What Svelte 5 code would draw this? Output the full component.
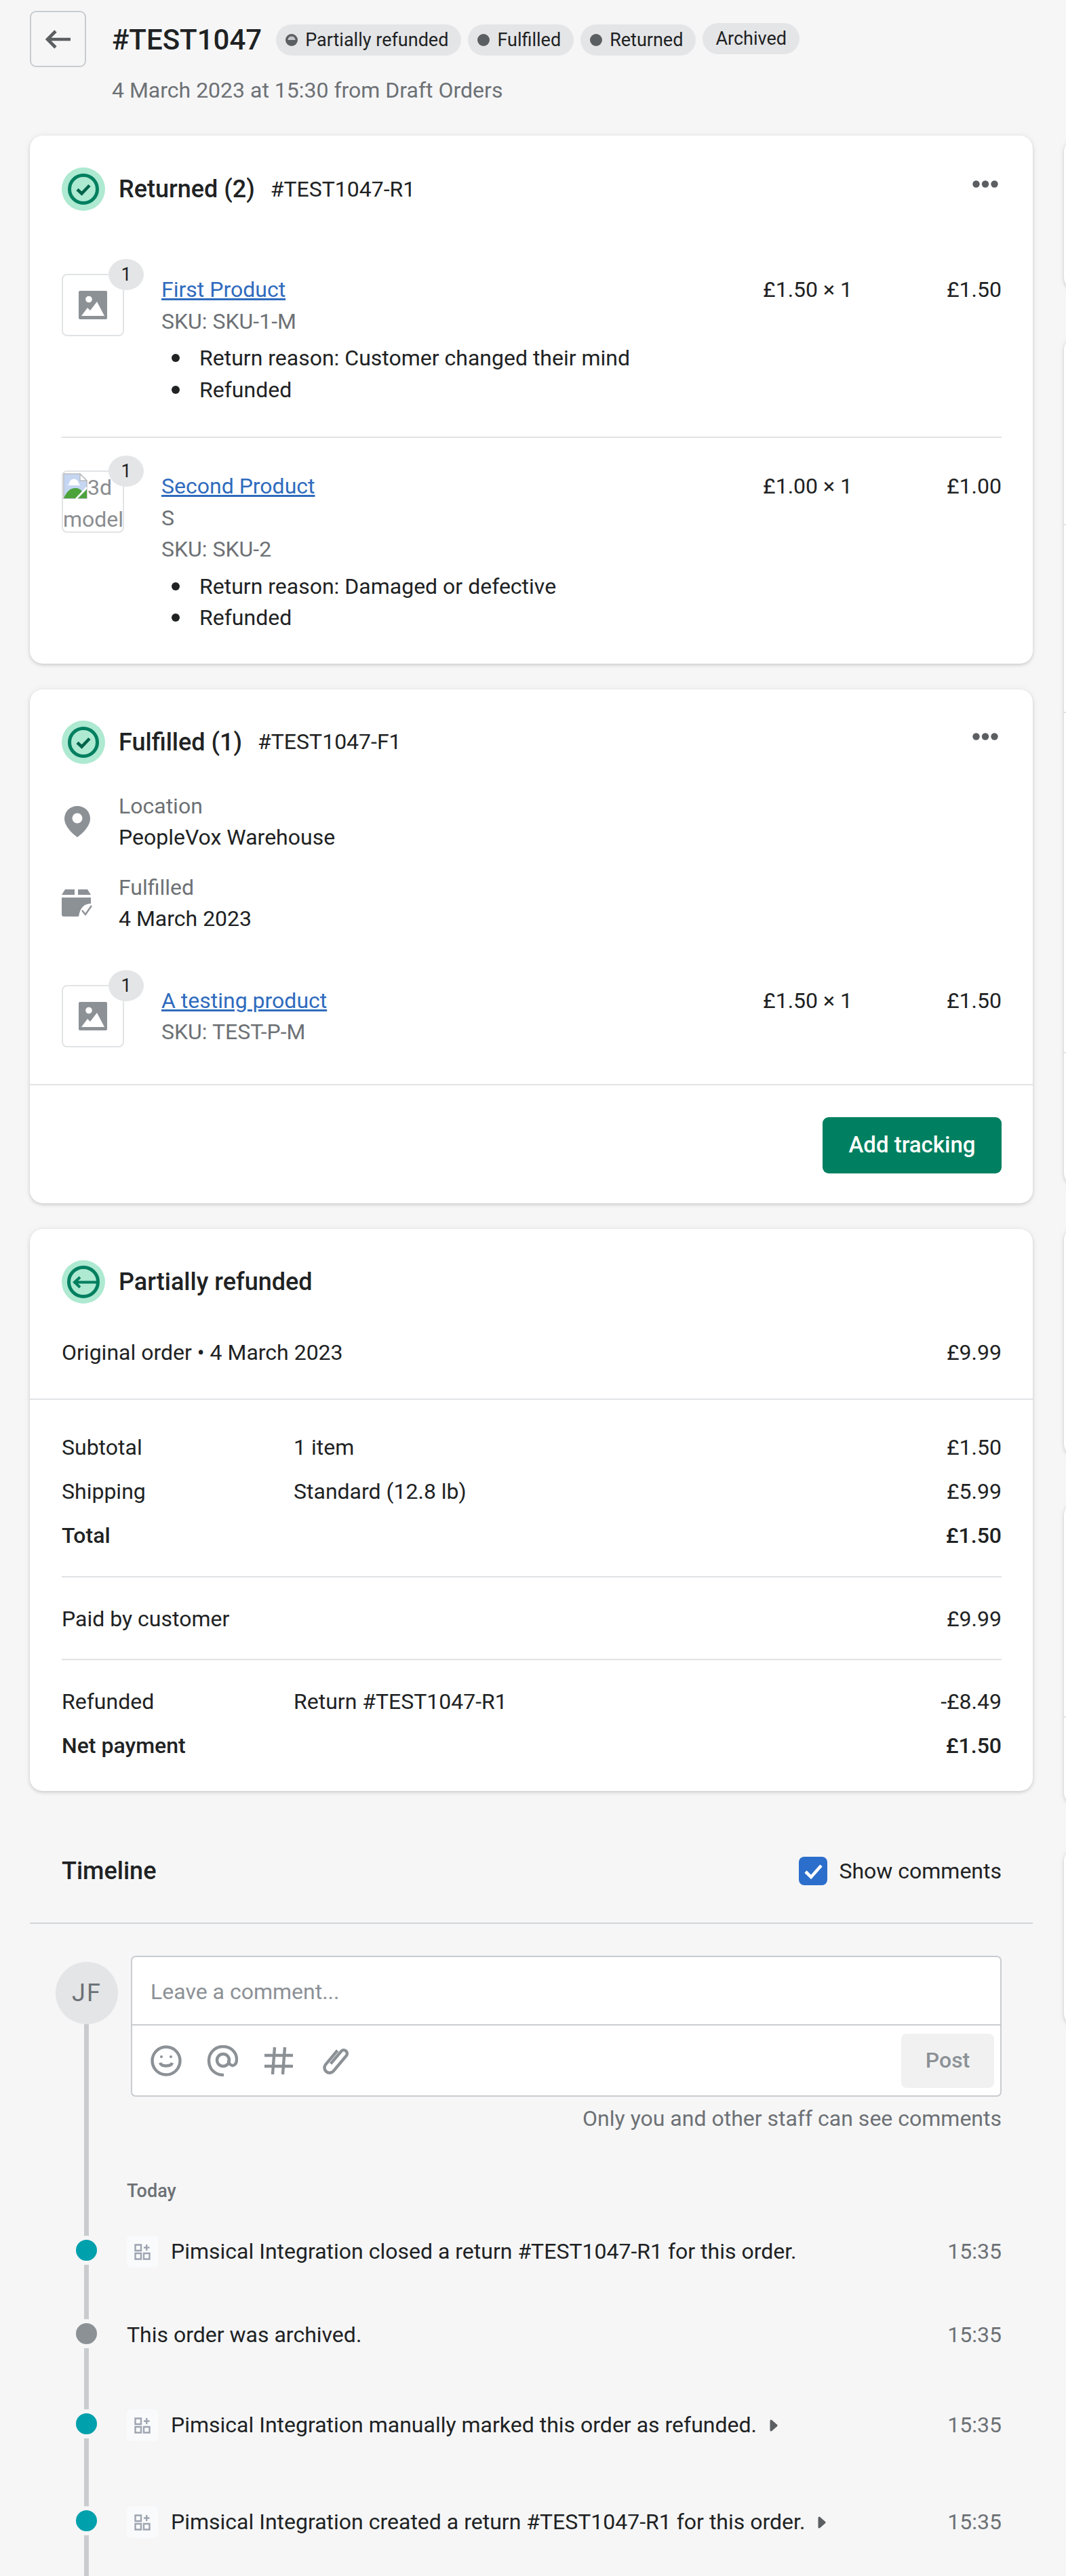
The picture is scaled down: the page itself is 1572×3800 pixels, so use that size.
<script>
	const returned = [
		{ title: 'First Product', variant: '', sku: 'SKU-1-M', reason: 'Customer changed their mind', price: '£1.50', broken: false },
		{ title: 'Second Product', variant: 'S', sku: 'SKU-2', reason: 'Damaged or defective', price: '£1.00', broken: true }
	];

	const events = [
		{ text: 'Pimsical Integration closed a return #TEST1047-R1 for this order.', app: true },
		{ text: 'This order was archived.', app: false },
		{ text: 'Pimsical Integration manually marked this order as refunded.', app: true, more: true },
		{ text: 'Pimsical Integration created a return #TEST1047-R1 for this order.', app: true, more: true }
	];

	const aside = [
		{ gap: 5, parts: [223] },
		{ gap: 69, parts: [276, 275, 500, 195] },
		{ gap: 61, parts: [339] },
		{ gap: 67, parts: [316, 129] },
		{ gap: 63, parts: [263] }
	];
</script>

{#snippet checkIcon()}
	<svg class="status" viewBox="0 0 64 64">
		<circle cx="32" cy="32" r="32" fill="#aee9d1" />
		<circle cx="32" cy="32" r="20.5" fill="none" stroke="#007f5f" stroke-width="5" />
		<path d="M23 32.5l6.5 6 11.5-12" fill="none" stroke="#00634b" stroke-width="4.5" />
	</svg>
{/snippet}

{#snippet dots()}
	<svg class="dots" viewBox="0 0 38 11" fill="#5c5f62">
		<circle cx="5.5" cy="5.5" r="5.2" />
		<circle cx="19" cy="5.5" r="5.2" />
		<circle cx="32.5" cy="5.5" r="5.2" />
	</svg>
{/snippet}

{#snippet thumb(broken)}
	<div class="thumb">
		{#if broken}
			<div class="alt">
				<svg class="broken" viewBox="0 0 36 38">
					<path d="M1 1h24l10 10v27H1z" fill="#c5d6f2" stroke="#b9bcc0" stroke-width="1.5" />
					<path d="M25 1v10h10z" fill="#fff" stroke="#b9bcc0" stroke-width="1.5" />
					<path d="M9 16a7 7 0 0 1 14-1q2 2 2 3H7q0-1 2-2z" fill="#fff" />
					<path d="M1 37c4-10 10-15 17-15 5 0 8 2 10 5L20 37z" fill="#4ca33b" />
					<path d="M22 37l13-13v13z" fill="#4ca33b" />
					<path d="M19 38l16-17" stroke="#fff" stroke-width="2.5" />
				</svg>3d model
			</div>
		{:else}
			<svg class="placeholder" viewBox="0 0 42 42">
				<rect width="42" height="42" rx="2" fill="#8c9196" />
				<circle cx="15" cy="12.5" r="4.8" fill="#fff" />
				<path d="M4 37l9-12 4 4 10-13 11 21z" fill="#fff" />
			</svg>
		{/if}
		<span class="count">1</span>
	</div>
{/snippet}

<div class="page">
	<main>
		<header>
			<button class="back" aria-label="Back">
				<svg viewBox="0 0 37 28" fill="none" stroke="#5c5f62" stroke-width="4.6">
					<path d="M37 14H3M15 2L3 14l12 12" />
				</svg>
			</button>
			<div>
				<div class="title-row">
					<h1>#TEST1047</h1>
					<span class="badge">
						<svg class="pip" viewBox="0 0 18 18">
							<circle cx="9" cy="9" r="9" fill="#5c5f62" />
							<path d="M3.5 9a5.5 5.5 0 0 1 11 0z" fill="#c4c6c9" />
						</svg>
						Partially refunded
					</span>
					<span class="badge"><i class="pip round"></i>Fulfilled</span>
					<span class="badge"><i class="pip round"></i>Returned</span>
					<span class="badge plain">Archived</span>
				</div>
				<p class="muted sub">4 March 2023 at 15:30 from Draft Orders</p>
			</div>
		</header>

		<section class="card">
			<div class="card-head">
				{@render checkIcon()}
				<h2>Returned (2)</h2>
				<span class="ref">#TEST1047-R1</span>
				{@render dots()}
			</div>
			<div class="returned">
				{#each returned as item}
					<div class="line-item">
						{@render thumb(item.broken)}
						<div class="info">
							<a href="#top">{item.title}</a>
							{#if item.variant}<div class="muted">{item.variant}</div>{/if}
							<div class="muted">SKU: {item.sku}</div>
							<ul>
								<li>Return reason: {item.reason}</li>
								<li>Refunded</li>
							</ul>
						</div>
						<span>{item.price} × 1</span>
						<span class="total">{item.price}</span>
					</div>
				{/each}
			</div>
		</section>

		<section class="card fulfilled">
			<div class="card-head">
				{@render checkIcon()}
				<h2>Fulfilled (1)</h2>
				<span class="ref">#TEST1047-F1</span>
				{@render dots()}
			</div>
			<div class="meta first">
				<span class="meta-icon">
					<svg class="pin" viewBox="0 0 38 46">
						<path d="M19 0C8.5 0 0 8 0 18.5 0 30 12 41 19 46c7-5 19-16 19-27.5C38 8 29.5 0 19 0z" fill="#8c9196" />
						<circle cx="19" cy="18" r="7.5" fill="#fff" />
					</svg>
				</span>
				<div>
					<div class="muted">Location</div>
					<div>PeopleVox Warehouse</div>
				</div>
			</div>
			<div class="meta">
				<span class="meta-icon">
					<svg class="parcel" viewBox="0 0 46 40">
						<path d="M5 0h14v8H0zM24 0h14l5 8H24z" fill="#8c9196" />
						<path d="M0 12h43v9C33 21 27 27 25 40H3q-3 0-3-3z" fill="#8c9196" />
						<path d="M30 31l5 6 9-13" fill="none" stroke="#8c9196" stroke-width="2.4" />
					</svg>
				</span>
				<div>
					<div class="muted">Fulfilled</div>
					<div>4 March 2023</div>
				</div>
			</div>
			<div class="line-item single">
				{@render thumb(false)}
				<div class="info">
					<a href="#top">A testing product</a>
					<div class="muted">SKU: TEST-P-M</div>
				</div>
				<span>£1.50 × 1</span>
				<span class="total">£1.50</span>
			</div>
			<div class="card-foot">
				<button class="primary">Add tracking</button>
			</div>
		</section>

		<section class="card payment">
			<div class="card-head">
				<svg class="status" viewBox="0 0 64 64">
					<circle cx="32" cy="32" r="32" fill="#aee9d1" />
					<circle cx="32" cy="32" r="21.5" fill="none" stroke="#007f5f" stroke-width="5" />
					<path d="M19 32.5h34M27 25l-8 7.5 8 7.5" fill="none" stroke="#007f5f" stroke-width="4" />
				</svg>
				<h2>Partially refunded</h2>
			</div>
			<div class="row original">
				<span>Original order • 4 March 2023</span>
				<span>£9.99</span>
			</div>
			<div class="summary">
				<div class="rows">
					<div class="row"><span class="label">Subtotal</span><span class="grow">1 item</span><span>£1.50</span></div>
					<div class="row"><span class="label">Shipping</span><span class="grow">Standard (12.8 lb)</span><span>£5.99</span></div>
					<div class="row strong"><span>Total</span><span>£1.50</span></div>
				</div>
				<div class="rows ruled">
					<div class="row"><span>Paid by customer</span><span>£9.99</span></div>
				</div>
				<div class="rows ruled">
					<div class="row"><span class="label">Refunded</span><span class="grow">Return #TEST1047-R1</span><span>-£8.49</span></div>
					<div class="row strong"><span>Net payment</span><span>£1.50</span></div>
				</div>
			</div>
		</section>

		<div class="timeline-head">
			<h2>Timeline</h2>
			<label>
				<span class="check">
					<svg viewBox="0 0 42 42" fill="none" stroke="#fff" stroke-width="4.6">
						<path d="M10 22l8 8 15-17" />
					</svg>
				</span>
				Show comments
			</label>
		</div>

		<div class="timeline">
			<i class="rail"></i>
			<div class="composer">
				<div class="avatar">JF</div>
				<div class="box">
					<div class="placeholder-text">Leave a comment...</div>
					<div class="tools">
						<svg viewBox="0 0 46 46" fill="none" stroke="#8c9196" stroke-width="4.4">
							<circle cx="23" cy="23" r="20.5" />
							<path d="M14 26c2 6 16 6 18 0" />
							<circle cx="16" cy="17" r="2" fill="#8c9196" stroke="none" />
							<circle cx="30" cy="17" r="2" fill="#8c9196" stroke="none" />
						</svg>
						<svg viewBox="0 0 46 46" fill="none" stroke="#8c9196" stroke-width="4.4">
							<path d="M25 44C12 44 3 35 3 23S12 2 24 2s20 9 20 19c0 6-3 9-6 9s-6-3-6-8" />
							<circle cx="24" cy="22" r="9" />
						</svg>
						<svg class="hash" viewBox="0 0 42 46" fill="none" stroke="#8c9196" stroke-width="4.4">
							<path d="M0 15h42M0 31h42M15 3l-3 40M30 3l-3 40" />
						</svg>
						<svg viewBox="0 0 46 46" fill="none" stroke="#8c9196" stroke-width="4.4">
							<path d="M16 9v27a7.500 7.500 0 0 0 15 0V6.500a5 5 0 0 0-10 0v24" transform="rotate(40 23 23)" />
						</svg>
						<button class="post">Post</button>
					</div>
				</div>
			</div>
			<p class="muted note">Only you and other staff can see comments</p>
			<div class="today muted">Today</div>
			{#each events as event}
				<div class="event">
					<i class={['bullet', event.app && 'teal']}></i>
					{#if event.app}
						<span class="app">
							<svg viewBox="0 0 24 24" fill="none" stroke="#9ea5b1" stroke-width="2.4">
								<path d="M1.500 1.500h8.500v8.500H1.500zM1.500 14h8.500v8.500H1.500zM14 14h8.500v8.500H14zM18.200 1v9M14 5.500h8.500" />
							</svg>
						</span>
					{/if}
					<span>{event.text}</span>
					{#if event.more}
						<svg class="more" viewBox="0 0 12 18">
							<path d="M2 2l8 7-8 7z" fill="#5c5f62" stroke="#5c5f62" stroke-width="3" stroke-linejoin="round" />
						</svg>
					{/if}
					<time class="muted">15:35</time>
				</div>
			{/each}
		</div>
	</main>

	<aside>
		{#each aside as card}
			<div class="side-card" style="margin-top: {card.gap}px">
				{#each card.parts as h}
					<div class="side-part" style="height: {h}px"></div>
				{/each}
			</div>
		{/each}
	</aside>
</div>

<style>
	:global(body) {
		background: #f6f6f7;
	}

	.page {
		display: flex;
		width: 1572px;
		height: 3800px;
		overflow: hidden;
		background: #f6f6f7;
		color: #202223;
		font: 32px / 46.5px Roboto, sans-serif;
	}

	main {
		display: flex;
		flex: none;
		flex-direction: column;
		width: 1479px;
		margin-left: 44px;
	}

	main > * {
		flex-shrink: 0;
	}

	aside {
		flex: none;
		width: 400px;
		margin-left: 46px;
		padding-top: 200px;
	}

	h1,
	h2,
	p,
	ul {
		margin: 0;
	}

	button {
		font: inherit;
		border: none;
	}

	.muted {
		color: #6d7175;
	}

	/* header */
	header {
		display: flex;
		gap: 38px;
		height: 200px;
		padding-top: 16px;
		box-sizing: border-box;
	}

	.back {
		display: grid;
		flex: none;
		width: 83px;
		height: 83px;
		padding: 0;
		border: 2px solid #c9cccf;
		border-radius: 9px;
		background: #f6f6f7;
		place-items: center;
	}

	.back svg {
		width: 37px;
		height: 28px;
	}

	.title-row {
		display: flex;
		align-items: center;
		gap: 10px;
		height: 86px;
	}

	h1 {
		margin-right: 11px;
		font-size: 42px;
		font-weight: 500;
		line-height: 50px;
	}

	.badge {
		display: flex;
		align-items: center;
		gap: 11px;
		height: 46px;
		padding: 0 19px 0 14px;
		border-radius: 23px;
		background: #e4e5e7;
		font-size: 27px;
	}

	.badge.plain {
		margin-bottom: 4px;
		padding-left: 19px;
	}

	.pip {
		width: 18px;
		height: 18px;
	}

	.pip.round {
		border-radius: 50%;
		background: #5c5f62;
	}

	.sub {
		margin-top: 8px;
	}

	/* cards */
	.card {
		margin-bottom: 38px;
		padding: 47px 46px 44px 47px;
		border-radius: 19px;
		background: #fff;
		box-shadow: 0 0 12px rgba(23, 24, 24, 0.05), 0 2px 5px rgba(0, 0, 0, 0.15);
	}

	.card-head {
		display: flex;
		align-items: center;
		height: 64px;
	}

	.status {
		flex: none;
		width: 64px;
		height: 64px;
		margin-right: 20px;
	}

	h2 {
		font-size: 36px;
		font-weight: 500;
		line-height: 46px;
	}

	.ref {
		margin-left: 23px;
	}

	.dots {
		width: 38px;
		height: 11px;
		margin-bottom: 16px;
		margin-left: auto;
		margin-right: 5px;
	}

	.returned {
		margin-top: 93px;
	}

	.line-item {
		display: flex;
		align-items: flex-start;
	}

	.line-item + .line-item {
		margin-top: 46px;
		padding-top: 48px;
		border-top: 2px solid #e1e3e5;
	}

	.info {
		flex: 1;
		margin-left: 55px;
	}

	.info a {
		color: #2f6bbd;
	}

	ul {
		margin-top: 8px;
		padding-left: 56px;
		list-style: none;
	}

	li {
		position: relative;
	}

	li::before {
		position: absolute;
		top: 17px;
		left: -41px;
		width: 12px;
		height: 12px;
		border-radius: 50%;
		background: #202223;
		content: '';
	}

	.total {
		width: 220px;
		text-align: right;
	}

	.thumb {
		position: relative;
		flex: none;
		width: 92px;
		height: 92px;
		box-sizing: border-box;
		border: 2px solid #e1e3e5;
		border-radius: 8px;
		display: grid;
		place-items: center;
	}

	.placeholder {
		width: 42px;
		height: 42px;
	}

	.alt {
		width: 100%;
		height: 100%;
		overflow: hidden;
		color: #8a8d90;
		line-height: 47px;
	}

	.broken {
		width: 36px;
		height: 38px;
		vertical-align: -6px;
	}

	.count {
		position: absolute;
		top: -24px;
		right: -31px;
		width: 52px;
		height: 46px;
		border-radius: 50%;
		background: #e4e5e7;
		font-size: 27px;
		line-height: 46px;
		text-align: center;
	}

	/* fulfilled */
	.fulfilled {
		padding: 46px 0 44px;
	}

	.fulfilled .card-head,
	.fulfilled .meta,
	.fulfilled .line-item {
		padding: 0 46px 0 47px;
	}

	.meta {
		display: flex;
		margin-top: 27px;
	}

	.meta.first {
		margin-top: 39px;
	}

	.meta-icon {
		display: grid;
		flex: none;
		width: 46px;
		margin-right: 38px;
		place-items: center;
	}

	.pin {
		width: 38px;
		height: 46px;
	}

	.parcel {
		width: 46px;
		height: 40px;
	}

	.line-item.single {
		margin-top: 74px;
	}

	.card-foot {
		display: flex;
		justify-content: flex-end;
		margin-top: 53px;
		padding: 47px 46px 0;
		border-top: 2px solid #e1e3e5;
	}

	.primary {
		width: 264px;
		height: 83px;
		border-radius: 9px;
		background: #008060;
		color: #fff;
		font-size: 33px;
		font-weight: 500;
	}

	/* payment */
	.payment {
		padding: 46px 0 43px;
	}

	.payment .card-head {
		padding: 0 46px 0 47px;
	}

	.row {
		display: flex;
		justify-content: space-between;
	}

	.row .label {
		width: 342px;
	}

	.row .grow {
		flex: 1;
	}

	.original {
		margin-top: 49px;
		padding: 0 46px 45px 47px;
		border-bottom: 2px solid #e1e3e5;
	}

	.summary {
		margin: 47px 46px 0 47px;
	}

	.rows {
		display: flex;
		flex-direction: column;
		gap: 18.5px;
	}

	.rows.ruled {
		margin-top: 36px;
		padding-top: 38px;
		border-top: 2px solid #e1e3e5;
	}

	.strong {
		font-weight: 500;
	}

	/* timeline */
	.timeline-head {
		display: flex;
		align-items: center;
		justify-content: space-between;
		margin-top: 57px;
		padding: 0 46px 53px 47px;
		border-bottom: 2px solid #d2d5d8;
	}

	label {
		display: flex;
		align-items: center;
		gap: 17px;
	}

	.check {
		width: 42px;
		height: 42px;
		border-radius: 8px;
		background: #2c6ecb;
	}

	.check svg {
		display: block;
	}

	.timeline {
		position: relative;
		flex: 1;
		padding: 47px 46px 0 0;
	}

	.rail {
		position: absolute;
		top: 120px;
		bottom: 0;
		left: 80px;
		width: 7px;
		background: #c9cccf;
	}

	.composer {
		position: relative;
		display: flex;
		align-items: flex-start;
		gap: 19px;
		padding-left: 38px;
	}

	.avatar {
		display: grid;
		flex: none;
		width: 92px;
		height: 92px;
		margin-top: 9px;
		border-radius: 50%;
		background: #e4e5e7;
		color: #6d7175;
		font-size: 36px;
		letter-spacing: 2px;
		place-items: center;
	}

	.box {
		flex: 1;
		height: 208px;
		box-sizing: border-box;
		border: 2px solid #c9cccf;
		border-radius: 7px;
		background: #fff;
	}

	.placeholder-text {
		height: 101px;
		padding-left: 27px;
		border-bottom: 2px solid #c9cccf;
		box-sizing: border-box;
		color: #8c9196;
		line-height: 102px;
	}

	.tools {
		display: flex;
		align-items: center;
		gap: 37px;
		height: 103px;
		padding: 0 9px 0 27px;
	}

	.tools svg {
		width: 46px;
		height: 46px;
	}

	.tools .hash {
		width: 42px;
		margin: 0 2px;
	}

	.post {
		width: 137px;
		height: 80px;
		margin-left: auto;
		border-radius: 8px;
		background: #f1f1f1;
		color: #8c9196;
		font-weight: 500;
	}

	.note {
		margin-top: 9px;
		text-align: right;
	}

	.today {
		margin: 60px 0 0 143px;
		font-size: 27px;
		font-weight: 500;
	}

	.event {
		position: relative;
		display: flex;
		align-items: center;
		height: 47px;
		margin-top: 76px;
		margin-left: 143px;
	}

	.today + .event {
		margin-top: 43px;
	}

	.event:nth-last-child(2) {
		margin-top: 86px;
	}

	.event:last-child {
		margin-top: 96px;
	}

	.bullet {
		position: absolute;
		top: 0;
		left: -81px;
		width: 31px;
		height: 31px;
		border: 6px solid #f6f6f7;
		border-radius: 50%;
		background: #8c9196;
	}

	.bullet.teal {
		background: #00a0ac;
	}

	.app {
		display: grid;
		width: 46px;
		height: 47px;
		margin-right: 19px;
		border-radius: 6px;
		background: #f9fafb;
		place-items: center;
	}

	.app svg {
		width: 24px;
		height: 24px;
	}

	.more {
		width: 12px;
		height: 18px;
		margin-left: 19px;
	}

	time {
		margin-left: auto;
	}

	/* right column, only its edge shows */
	.side-card {
		border-radius: 19px;
		background: #fff;
		box-shadow: 0 0 12px rgba(23, 24, 24, 0.05), 0 2px 5px rgba(0, 0, 0, 0.15);
		overflow: hidden;
	}

	.side-part + .side-part {
		border-top: 2px solid #e1e3e5;
	}
</style>
